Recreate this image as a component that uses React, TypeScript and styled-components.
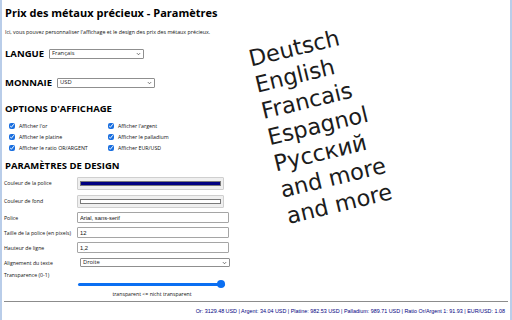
import React from "react";
import styled, { createGlobalStyle } from "styled-components";

const GlobalStyle = createGlobalStyle`
  html, body {
    margin: 0;
    padding: 0;
    background: #ffffff;
  }
  body {
    font-family: "Open Sans", "Noto Sans", sans-serif;
    color: #000000;
  }
  * {
    box-sizing: border-box;
  }
`;

const languages = [
  "Deutsch",
  "English",
  "Francais",
  "Espagnol",
  "Русский",
  "and more",
  "and more",
];

const displayOptions = [
  "Afficher l'or",
  "Afficher l'argent",
  "Afficher le platine",
  "Afficher le palladium",
  "Afficher le ratio OR/ARGENT",
  "Afficher EUR/USD",
];

const prices =
  "Or: 3129.48 USD | Argent: 34.04 USD | Platine: 982.53 USD | Palladium: 989.71 USD | Ratio Or/Argent 1: 91.93 | EUR/USD: 1.08";

interface DropdownProps {
  width: number;
  height: number;
  offset?: number;
  value: string;
}

// select with its own small chevron, the native arrow does not scale down
const Dropdown: React.FC<DropdownProps> = ({ width, height, offset = 0, value }) => (
  <DropdownBox $width={width} $height={height} $offset={offset}>
    <DropdownSelect defaultValue={value}>
      <option value={value}>{value}</option>
    </DropdownSelect>
    <Chevron viewBox="0 0 6 4" width="5" height="3">
      <path d="M0.8 0.8 L3 3 L5.2 0.8" fill="none" stroke="#333" strokeWidth="0.9" />
    </Chevron>
  </DropdownBox>
);

const App: React.FC = () => {
  return (
    <>
      <GlobalStyle />
      <Frame>
        <Main>
          <SettingsColumn>
            <Title>Prix des métaux précieux - Paramètres</Title>
            <Intro>
              Ici, vous pouvez personnaliser l'affichage et le design des prix
              des métaux précieux.
            </Intro>

            <InlineField $gap={12}>
              <FieldLabel>Langue</FieldLabel>
              <Dropdown width={95} height={10} value="Français" />
            </InlineField>

            <InlineField $gap={18}>
              <FieldLabel>Monnaie</FieldLabel>
              <Dropdown width={98} height={10} value="USD" />
            </InlineField>

            <SectionTitle $gap={15}>OPTIONS D'AFFICHAGE</SectionTitle>
            <OptionsGrid>
              {displayOptions.map((label) => (
                <OptionItem key={label}>
                  <CheckBox type="checkbox" defaultChecked />
                  <span>{label}</span>
                </OptionItem>
              ))}
            </OptionsGrid>

            <SectionTitle $gap={7}>PARAMÈTRES DE DESIGN</SectionTitle>
            <DesignGrid>
              <RowLabel>Couleur de la police</RowLabel>
              <ColorWell>
                <Swatch $color="#000080" />
              </ColorWell>

              <RowLabel>Couleur de fond</RowLabel>
              <ColorWell>
                <Swatch $color="#ffffff" />
              </ColorWell>

              <RowLabel>Police</RowLabel>
              <TextField defaultValue="Arial, sans-serif" />

              <RowLabel>Taille de la police (en pixels)</RowLabel>
              <TextField defaultValue="12" />

              <RowLabel>Hauteur de ligne</RowLabel>
              <TextField defaultValue="1,2" />

              <RowLabel>Alignement du texte</RowLabel>
              <Dropdown width={150} height={9} offset={3} value="Droite" />

              <RowLabel>Transparence (0-1)</RowLabel>
              <span />

              <span />
              <Slider type="range" min={0} max={1} step={0.1} defaultValue={1} />

              <span />
              <SliderCaption>transparent &lt;= nicht transparent</SliderCaption>
            </DesignGrid>
          </SettingsColumn>

          <LanguagePane>
            <LanguageList>
              {languages.map((lang, i) => (
                <div key={i}>{lang}</div>
              ))}
            </LanguageList>
          </LanguagePane>
        </Main>

        <PriceFooter>{prices}</PriceFooter>
      </Frame>
    </>
  );
};

export default App;

const Frame = styled.div`
  width: 512px;
  height: 320px;
  display: flex;
  flex-direction: column;
  border-left: 2px solid #b9cde9;
  border-right: 2px solid #b9cde9;
  background: #ffffff;
  overflow: hidden;
`;

const Main = styled.div`
  flex: 1;
  display: flex;
  min-height: 0;
`;

const SettingsColumn = styled.div`
  width: 236px;
  padding: 5px 0 0 3px;
  display: flex;
  flex-direction: column;
`;

const Title = styled.h1`
  margin: 0;
  height: 16px;
  font-size: 11px;
  line-height: 16px;
  font-weight: 700;
  white-space: nowrap;
`;

const Intro = styled.p`
  margin: 7px 0 0;
  height: 8px;
  font-size: 5.3px;
  line-height: 8px;
  white-space: nowrap;
  color: #111;
`;

const InlineField = styled.div<{ $gap: number }>`
  margin-top: ${(p) => p.$gap}px;
  height: 11px;
  display: flex;
  align-items: center;
  gap: 5px;
`;

const FieldLabel = styled.span`
  font-size: 9.5px;
  font-weight: 700;
  text-transform: uppercase;
  line-height: 11px;
`;

const DropdownBox = styled.div<{ $width: number; $height: number; $offset: number }>`
  position: relative;
  width: ${(p) => p.$width}px;
  height: ${(p) => p.$height}px;
  margin-left: ${(p) => p.$offset}px;
`;

const DropdownSelect = styled.select`
  -webkit-appearance: none;
  appearance: none;
  display: block;
  width: 100%;
  height: 100%;
  margin: 0;
  padding: 0 8px 0 2px;
  font-family: "Open Sans", sans-serif;
  font-size: 5.8px;
  line-height: 1;
  border: 1px solid #8f8f8f;
  border-radius: 1px;
  background: #ffffff;
  color: #1a1a1a;
  outline: none;
`;

const Chevron = styled.svg`
  position: absolute;
  right: 3px;
  top: 50%;
  transform: translateY(-50%);
  pointer-events: none;
`;

const SectionTitle = styled.h2<{ $gap: number }>`
  margin: ${(p) => p.$gap}px 0 0;
  height: 12px;
  font-size: 9.5px;
  line-height: 12px;
  font-weight: 700;
  white-space: nowrap;
`;

const OptionsGrid = styled.div`
  margin-top: 5px;
  padding-left: 4px;
  display: grid;
  grid-template-columns: 99px 1fr;
  grid-auto-rows: 11px;
`;

const OptionItem = styled.label`
  display: flex;
  align-items: center;
  gap: 4px;
  font-size: 5.3px;
  white-space: nowrap;
  color: #111;
`;

const CheckBox = styled.input`
  width: 6px;
  height: 6px;
  margin: 0;
  accent-color: #1a6fe0;
`;

const DesignGrid = styled.div`
  margin: 2px 0 0 -1px;
  display: grid;
  grid-template-columns: 73px 152px;
  grid-template-rows: 18px 18px 15px 15px 15px 15px 10px 8px 12px;
  align-items: center;
`;

const RowLabel = styled.span`
  font-size: 5.2px;
  white-space: nowrap;
  color: #111;
`;

const ColorWell = styled.div`
  width: 147px;
  height: 13px;
  padding: 3px 2px;
  border: 1px solid #cfcfcf;
  border-radius: 1px;
  background: #efefef;
`;

const Swatch = styled.div<{ $color: string }>`
  height: 100%;
  background: ${(p) => p.$color};
  border: 1px solid #7a7a7a;
`;

const TextField = styled.input`
  width: 152px;
  height: 11px;
  margin: 0;
  padding: 0 2px;
  font-family: "Liberation Sans", Arial, sans-serif;
  font-size: 5.8px;
  color: #111;
  border: 1px solid #a5a5a5;
  border-radius: 1px;
  outline: none;
`;

const Slider = styled.input`
  -webkit-appearance: none;
  appearance: none;
  width: 147px;
  height: 8px;
  margin: 0 0 0 1px;
  background: transparent;
  &::-webkit-slider-runnable-track {
    height: 3px;
    border-radius: 2px;
    background: #0b6ff2;
  }
  &::-webkit-slider-thumb {
    -webkit-appearance: none;
    width: 8px;
    height: 8px;
    margin-top: -2.5px;
    border-radius: 50%;
    background: #0b6ff2;
    border: none;
  }
`;

const SliderCaption = styled.span`
  font-size: 5.2px;
  text-align: center;
  color: #111;
  padding-right: 2px;
`;

const LanguagePane = styled.div`
  flex: 1;
  padding: 46px 0 0 8px;
`;

const LanguageList = styled.div`
  font-family: "DejaVu Sans", Verdana, sans-serif;
  font-size: 22.5px;
  line-height: 27px;
  color: #1c1c1c;
  white-space: nowrap;
  transform: rotate(-13.5deg);
  transform-origin: 0 0;
`;

const PriceFooter = styled.div`
  margin: 0 2px;
  height: 19px;
  border-top: 1px solid #8c8c8c;
  padding-right: 3px;
  font-family: "Liberation Sans", Arial, sans-serif;
  font-size: 5.4px;
  line-height: 18px;
  text-align: right;
  color: #000080;
  white-space: nowrap;
`;
